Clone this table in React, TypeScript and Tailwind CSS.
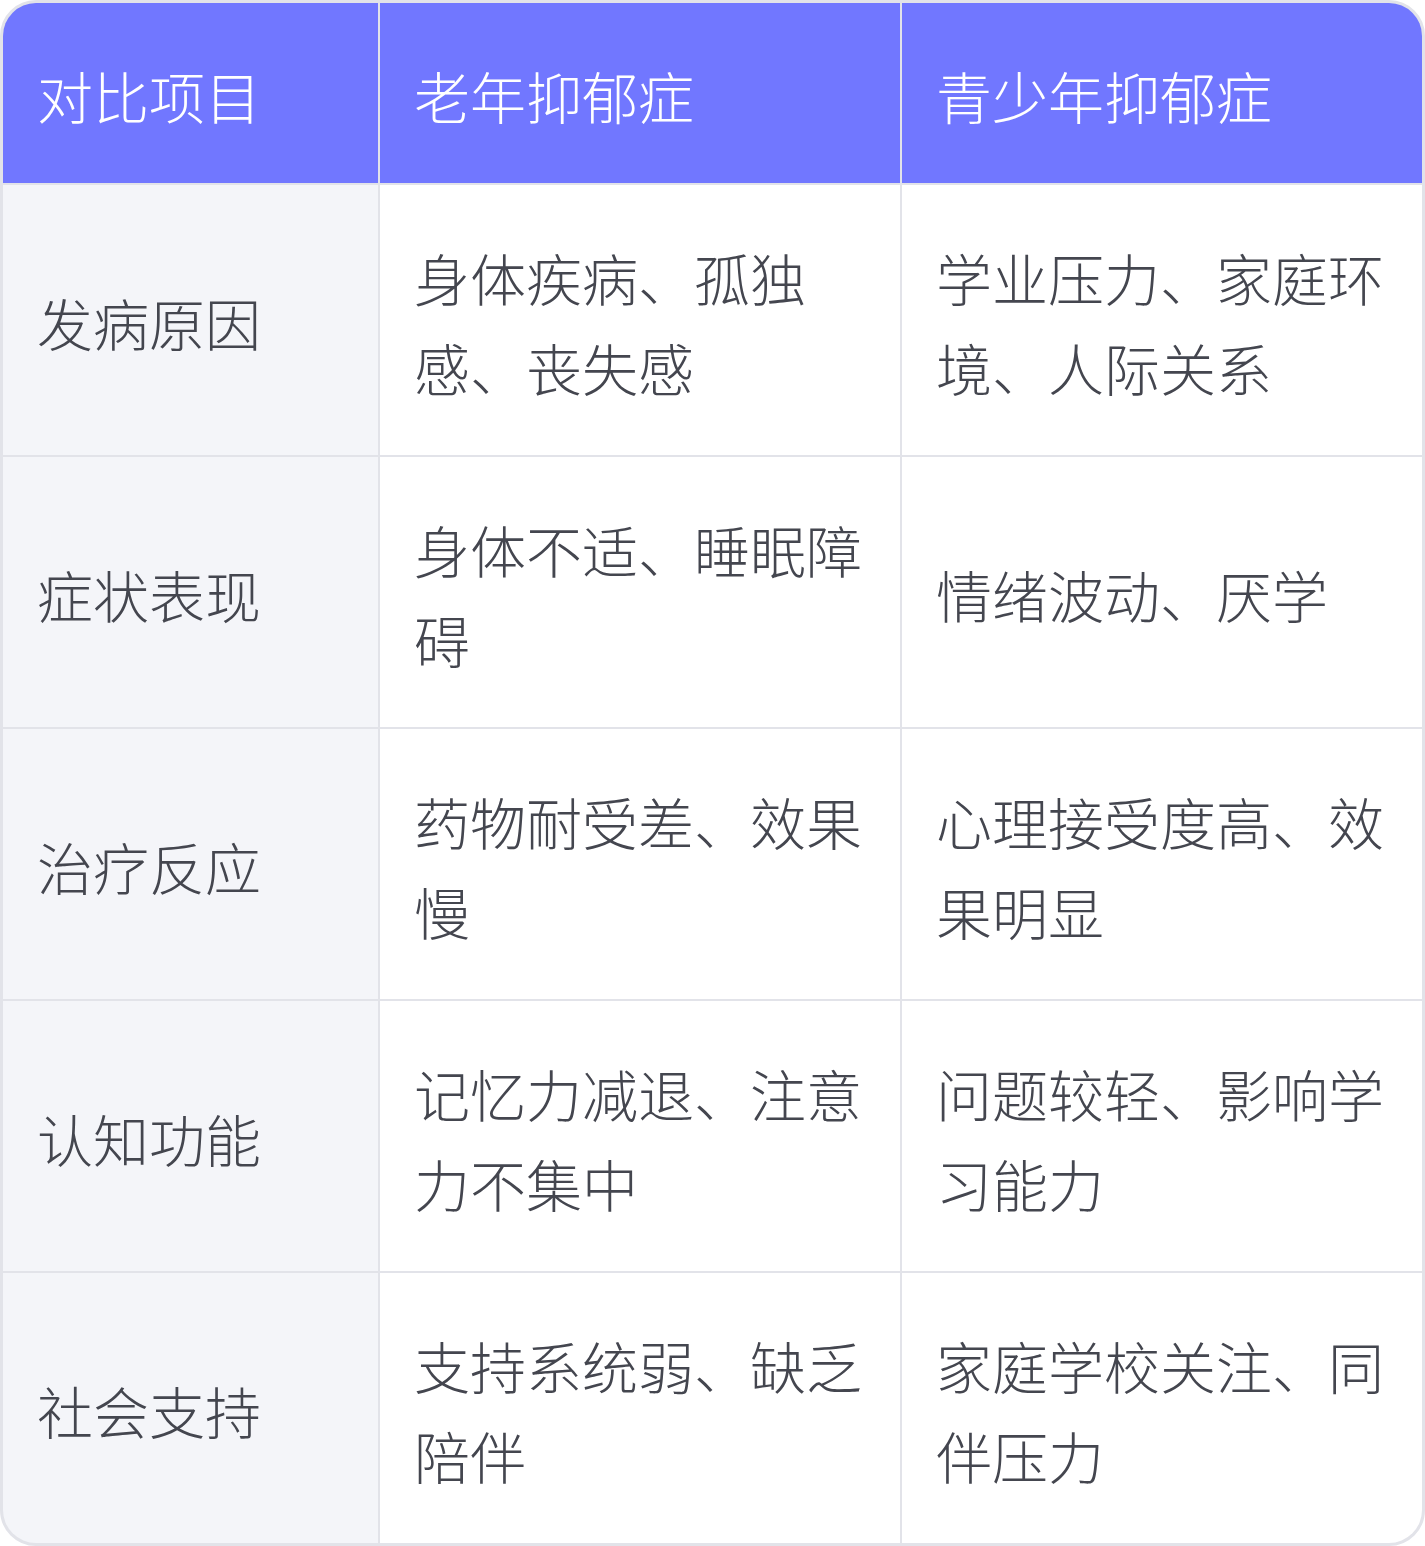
const HEAD = ["对比项目", "老年抑郁症", "青少年抑郁症"];

const ROWS = [
  ["发病原因", "身体疾病、孤独感、丧失感", "学业压力、家庭环境、人际关系"],
  ["症状表现", "身体不适、睡眠障碍", "情绪波动、厌学"],
  ["治疗反应", "药物耐受差、效果慢", "心理接受度高、效果明显"],
  ["认知功能", "记忆力减退、注意力不集中", "问题较轻、影响学习能力"],
  ["社会支持", "支持系统弱、缺乏陪伴", "家庭学校关注、同伴压力"],
];

export default function App() {
  return (
    <div
      className="w-[1425px] h-[1546px] bg-white"
      style={{ fontFamily: '"Noto Sans CJK SC", "Noto Sans", sans-serif' }}
    >
      <div className="grid grid-cols-[375px_520px_520px] grid-rows-[180px_repeat(5,270px)] gap-[2px] bg-[#e2e3e9] border-[3px] border-[#e2e3e9] rounded-[36px] overflow-hidden text-[56px] leading-[90px] font-light">
        {HEAD.map((h) => (
          <div key={h} className="flex items-center pl-[34px] pr-[35px] pt-[4px] bg-[#7177ff] text-white">
            {h}
          </div>
        ))}
        {ROWS.map((row) =>
          row.map((cell, i) => (
            <div
              key={row[0] + i}
              className={`flex items-center pl-[34px] pr-[35px] pt-[4px] text-[#44464f] ${
                i === 0 ? "bg-[#f4f5f9]" : "bg-white"
              }`}
            >
              <span>{cell}</span>
            </div>
          )),
        )}
      </div>
    </div>
  );
}
